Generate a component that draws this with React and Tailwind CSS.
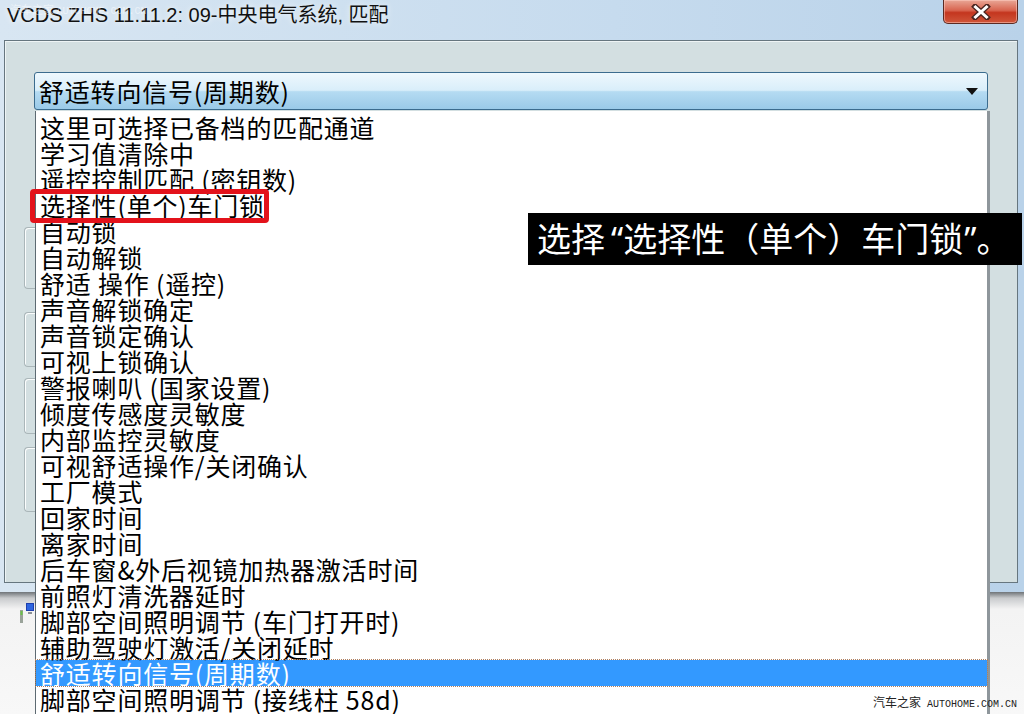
const items = [
  '这里可选择已备档的匹配通道',
  '学习值清除中',
  '遥控控制匹配 (密钥数)',
  '选择性(单个)车门锁',
  '自动锁',
  '自动解锁',
  '舒适 操作 (遥控)',
  '声音解锁确定',
  '声音锁定确认',
  '可视上锁确认',
  '警报喇叭 (国家设置)',
  '倾度传感度灵敏度',
  '内部监控灵敏度',
  '可视舒适操作/关闭确认',
  '工厂模式',
  '回家时间',
  '离家时间',
  '后车窗&外后视镜加热器激活时间',
  '前照灯清洗器延时',
  '脚部空间照明调节 (车门打开时)',
  '辅助驾驶灯激活/关闭延时',
  '舒适转向信号(周期数)',
  '脚部空间照明调节 (接线柱 58d)'
];

const selectedIndex = 21;

// left edges of the group boxes that peek out behind the open list
const groups = [
  { mt: 'mt-[117px]', h: 'h-[62px]' },
  { mt: 'mt-[23px]', h: 'h-[55px]' },
  { mt: 'mt-[11px]', h: 'h-[56px]' },
  { mt: 'mt-[13px]', h: 'h-[65px]' }
];

const CloseButton = () => (
  <div className="flex h-[24px] w-[75px] items-center justify-center rounded-b-[5px] border border-t-0 border-[#5b2a22] bg-[linear-gradient(to_bottom,#e9a796_0%,#d8644f_45%,#c4361f_55%,#d0563a_100%)] shadow-[inset_0_0_0_1px_rgba(255,210,200,0.5)]">
    <svg width="20" height="16" viewBox="0 0 20 16">
      <path d="M4 2.5 L16 13.5 M16 2.5 L4 13.5" stroke="#4a2520" strokeWidth="5.5" strokeLinecap="square" />
      <path d="M4.5 3 L15.5 13 M15.5 3 L4.5 13" stroke="#ffffff" strokeWidth="3" strokeLinecap="square" />
    </svg>
  </div>
);

const App = () => {
  return (
    <div className="relative h-[714px] w-[1024px] overflow-hidden bg-[#f6f6f6] font-['Noto_Sans_CJK_SC',sans-serif] text-black">
      {/* window frame */}
      <div className="flex flex-col bg-[linear-gradient(to_right,#d8e6f2,#c6dbee_60%,#b9d2e9)] pb-[9px] pl-1 pr-[6px]">
        <div className="relative flex h-[40px] items-start justify-between">
          <div className="pl-[3px] pt-[1px] font-['Liberation_Sans','Noto_Sans_CJK_SC',sans-serif] text-[20px] leading-[28px] text-[#111] [text-shadow:0_0_6px_rgba(255,255,255,0.9)]">
            VCDS ZHS 11.11.2: 09-中央电气系统, 匹配
          </div>
          <CloseButton />
          <div className="absolute left-[6px] top-[2px] text-[11px] leading-[14px] text-white/50">
            汽车之家 <span className="font-['Liberation_Mono',monospace] text-[10px]">AUTOHOME.COM.CN</span>
          </div>
        </div>
        <div className="flex h-[543px] flex-col border border-[#66767f] bg-[#d3dfe1] shadow-[inset_1px_1px_0_#eef4f5]">
          <div className="pl-[29px] pt-[31px]">
            <div className="flex h-[38px] w-[954px] items-center justify-between rounded-[3px] border border-[#3b6c8e] bg-[linear-gradient(to_bottom,#eef8fd_0%,#d9eefa_48%,#b5dbf2_52%,#9acae8_100%)] pl-[4px] pr-[9px]">
              <span className="text-[25px] leading-[26px] tracking-[0.8px]">舒适转向信号(周期数)</span>
              <svg width="12" height="7" viewBox="0 0 12 7">
                <path d="M0 0 H12 L6 7 Z" fill="#111" />
              </svg>
            </div>
          </div>
          <div className="flex flex-col pl-[19px]">
            {groups.map((g, i) => (
              <div
                key={i}
                className={`${g.mt} ${g.h} w-[16px] rounded-l-[4px] border border-r-0 border-[#aab6b9] shadow-[inset_1px_1px_0_#fbfdfd]`}
              />
            ))}
          </div>
        </div>
      </div>

      {/* area below the window */}
      <div className="h-[122px] bg-[linear-gradient(to_bottom,#6f7478_0%,#c9cbcd_5%,#f3f3f3_14%,#f8f8f8_100%)] pl-[19px] pt-[10px]">
        <svg width="16" height="22" viewBox="0 0 16 22">
          <rect x="1" y="8" width="3" height="13" fill="#9aa39a" />
          <rect x="1.5" y="9" width="2" height="4" fill="#6cc04a" />
          <rect x="7" y="1" width="8" height="8" fill="#1e3fae" />
          <rect x="8" y="2" width="6" height="6" fill="#2f66e0" />
          <rect x="9" y="10" width="4" height="2" fill="#8a8f95" />
        </svg>
      </div>

      {/* open drop-down list */}
      <div className="absolute left-[35px] top-[111px] h-[620px] w-[955px] border-l border-r-[3px] border-l-[#5d6a72] border-r-[#8e969b] bg-white pt-[3px]">
        {items.map((label, i) => (
          <div
            key={label}
            className={
              i === selectedIndex
                ? 'h-[26px] whitespace-nowrap bg-[#3399ff] pl-[4px] text-[25px] leading-[26px] tracking-[0.8px] text-white outline-1 outline-dotted outline-[#b08060]'
                : 'h-[26px] whitespace-nowrap pl-[4px] text-[25px] leading-[26px] tracking-[0.8px]'
            }
          >
            {label}
          </div>
        ))}
      </div>

      {/* annotation */}
      <div className="absolute left-[30px] top-[189px] h-[34px] w-[239px] rounded-[4px] border-[5px] border-[#e3121b]" />
      <div className="absolute left-[528px] top-[213px] flex h-[52px] w-[494px] items-center bg-black pl-[9px] font-['Noto_Sans','Noto_Sans_CJK_SC',sans-serif] text-[34px] leading-[40px] text-white">
        <span className="whitespace-nowrap">
          选择<span className="ml-[6px]">“</span>选择性（单个）车门锁<span className="ml-[1px]">”</span>。
        </span>
      </div>

      {/* watermark */}
      <div className="absolute bottom-[2px] right-[7px] flex items-baseline gap-[6px] text-[12px] leading-[14px] text-[#222]">
        <span>汽车之家</span>
        <span className="font-['Liberation_Mono',monospace] text-[10px]">AUTOHOME.COM.CN</span>
      </div>
    </div>
  );
};

export default App;
